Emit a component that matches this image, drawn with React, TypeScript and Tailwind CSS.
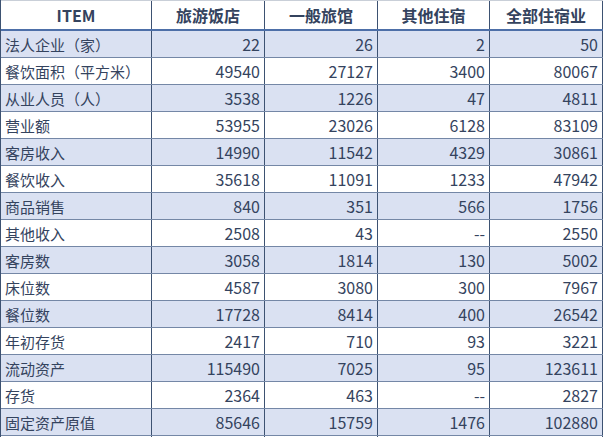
const rows: [string, string, string, string, string][] = [
  ["法人企业（家）", "22", "26", "2", "50"],
  ["餐饮面积（平方米）", "49540", "27127", "3400", "80067"],
  ["从业人员（人）", "3538", "1226", "47", "4811"],
  ["营业额", "53955", "23026", "6128", "83109"],
  ["客房收入", "14990", "11542", "4329", "30861"],
  ["餐饮收入", "35618", "11091", "1233", "47942"],
  ["商品销售", "840", "351", "566", "1756"],
  ["其他收入", "2508", "43", "--", "2550"],
  ["客房数", "3058", "1814", "130", "5002"],
  ["床位数", "4587", "3080", "300", "7967"],
  ["餐位数", "17728", "8414", "400", "26542"],
  ["年初存货", "2417", "710", "93", "3221"],
  ["流动资产", "115490", "7025", "95", "123611"],
  ["存货", "2364", "463", "--", "2827"],
  ["固定资产原值", "85646", "15759", "1476", "102880"],
  ["", "", "", "", ""],
];

const widths = ["w-[151px]", "w-[113px]", "w-[113px]", "w-[112px]", "w-[113px]"];
const headers = ["ITEM", "旅游饭店", "一般旅馆", "其他住宿", "全部住宿业"];

export default function App() {
  return (
    <div
      className="w-[604px] h-[437px] overflow-hidden bg-white text-[#34435e]"
      style={{ fontFamily: '"Microsoft YaHei", "Noto Sans CJK SC", "Noto Sans", sans-serif' }}
    >
      <div className="w-[603px] border-l border-[#3d5272]">
        <div className="flex h-[31px] border-t border-t-[#c9cfd8] border-b-2 border-b-[#4d6fa8]">
          {headers.map((h, i) => (
            <div
              key={h}
              className={`${widths[i]} shrink-0 border-r border-[#3d5272] flex items-center justify-center font-bold text-[16px] leading-none`}
            >
              {h}
            </div>
          ))}
        </div>
        {rows.map((r, ri) => (
          <div
            key={ri}
            className={`flex h-[27px] border-b border-[#7487a6] ${ri % 2 === 0 && r[0] ? "bg-[#dae1f2]" : "bg-white"}`}
          >
            {r.map((c, ci) => (
              <div
                key={ci}
                className={`${widths[ci]} ${ci === 0 ? "pl-[4px] justify-start text-[15px]" : "pr-[4px] justify-end text-[16px]"} shrink-0 border-r border-[#3d5272] flex items-center leading-none whitespace-nowrap`}
              >
                {c}
              </div>
            ))}
          </div>
        ))}
      </div>
    </div>
  );
}
